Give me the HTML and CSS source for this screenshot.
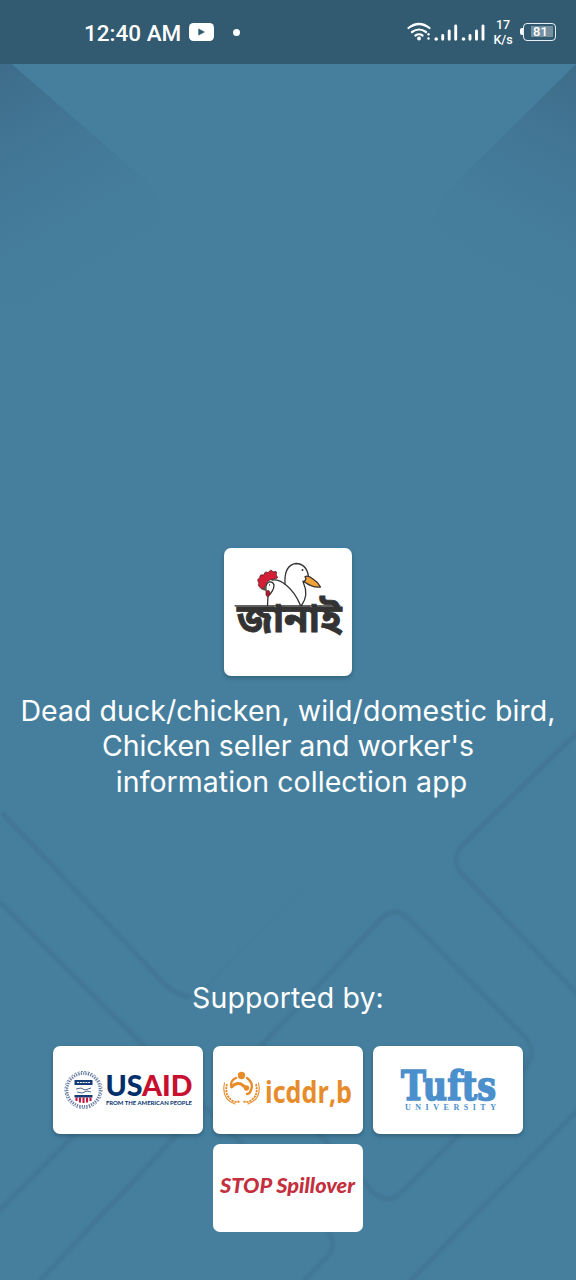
FILE: index.html
```html
<!DOCTYPE html>
<html lang="en">
<head>
<meta charset="utf-8">
<title>Janai</title>
<link rel="stylesheet" href="styles.css">
</head>
<body>
<div class="screen">
  <svg class="backdrop" viewBox="0 0 576 1280" aria-hidden="true">
    <defs>
      <linearGradient id="shade-left" gradientUnits="userSpaceOnUse" x1="0" y1="60" x2="140" y2="300">
        <stop offset="0" stop-color="#3d6c89"/><stop offset="1" stop-color="#467f9e" stop-opacity="0"/>
      </linearGradient>
      <linearGradient id="shade-right" gradientUnits="userSpaceOnUse" x1="576" y1="60" x2="450" y2="300">
        <stop offset="0" stop-color="#3d6c89"/><stop offset="1" stop-color="#467f9e" stop-opacity="0"/>
      </linearGradient>
      <linearGradient id="fade" gradientUnits="userSpaceOnUse" x1="195" y1="990" x2="310" y2="880">
        <stop offset="0" stop-color="#427897" stop-opacity=".5"/><stop offset="1" stop-color="#427897" stop-opacity=".1"/>
      </linearGradient>
    </defs>
    <path d="M0 60H7L150 184Q185 230 140 290Q80 350 0 300Z" fill="url(#shade-left)"/>
    <path d="M576 64V310Q510 350 450 285Q415 230 450 188Z" fill="url(#shade-right)"/>
    <g class="lines">
      <path d="M2 813L160 979Q174 995 190 997"/>
      <path d="M0 902L235 1137Q315 1215 328 1232Q338 1246 326 1258L303 1282"/>
      <path d="M580 730L462 846Q450 860 462 874L580 997"/>
      <path d="M240 1068L382 918Q395 906 408 918L525 1037Q538 1053 525 1068L402 1192Q388 1206 373 1192L240 1048"/>
      <path d="M-4 1214L90 1119"/>
      <path d="M37 1284L200 1110"/>
      <path d="M580 1108L407 1284"/>
    </g>
    <path d="M190 997Q204 992 220 972L310 880" fill="none" stroke="url(#fade)" stroke-width="5"/>
  </svg>

  <header class="status">
    <span class="time">12:40 AM</span>
    <svg class="youtube" viewBox="0 0 25 18"><rect width="25" height="18" rx="4.500" fill="#fff"/><path d="M9.300 5.400L16 9L9.300 12.600Z" fill="#325a70"/></svg>
    <span class="dot"></span>
    <svg class="signals" viewBox="0 0 82 24">
      <g fill="none" stroke="#fff" stroke-width="2.200" stroke-linecap="round">
        <path d="M3.500 8Q14 0 24.500 8M7 12Q14 7 21 12M10.500 15.500Q14 13 17.500 15.500"/>
      </g>
      <circle cx="14" cy="18.500" r="1.900" fill="#fff"/>
      <g fill="#fff"><circle cx="23.500" cy="14.200" r="1.200"/><circle cx="23.500" cy="18.500" r="1.200"/><circle cx="31.200" cy="19" r="1.800"/><circle cx="58.500" cy="19" r="1.800"/></g>
      <g stroke="#fff" stroke-width="2.900" stroke-linecap="round"><path d="M37.700 15.500V19.200M44.200 11V19.200M50.700 6V19.200M65 15.500V19.200M71.500 11V19.200M78 6V19.200"/></g>
    </svg>
    <span class="speed"><span>17</span><span>K/s</span></span>
    <span class="battery"><span class="level">81</span></span>
  </header>

  <main class="content">
    <div class="app-logo">
      <svg viewBox="0 0 128 128" role="img" aria-label="জানাই">
        <text class="bangla" x="13" y="84" textLength="105" lengthAdjust="spacingAndGlyphs">জানাই</text>
        <g fill="none" stroke="#333" stroke-width="1.300" stroke-linecap="round" stroke-linejoin="round">
          <path d="M11 57.800H116"/>
          <path d="M43.500 57.500L44 48Q50 43 50 37Q49 33 45 34Q41 36 42 42" fill="#fff"/>
          <path d="M48 32Q55 31 62 37Q71 44 76.500 57.500"/>
          <path d="M61 36Q60 17 72 15.500Q83 16 84.500 29M80.500 34Q78 32 79.500 35Q85 47 77.500 57.500"/>
          <path d="M81 28.700Q84 27 89 31Q94 34 96.500 39Q88 40 80 33.500Q83 31 81 28.700Z" fill="#f2a33a"/>
        </g>
        <path d="M38 41Q33 38 35 35Q32 31 36 30Q35 26 40 27Q41 22 44 25Q47 20 49 24Q54 22 52 27Q56 31 49 31Q42 32 41 39Z" fill="#d51d35" stroke="#542028" stroke-width=".8"/>
        <path d="M42 43Q46 41 46 46Q44 51 42 47Z" fill="#b21b2c" stroke="#542028" stroke-width=".7"/>
        <path d="M37 41L41 39L42 43L39 42Z" fill="#5b4a36"/>
        <circle cx="78.500" cy="22" r="1" fill="#333"/><circle cx="45.500" cy="37" r=".7" fill="#333"/>
      </svg>
    </div>
    <h1 class="description">Dead duck/chicken, wild/domestic bird,<br><span class="line-two">Chicken seller and worker's</span><br><span class="line-three">information collection app</span></h1>
    <h2 class="supported">Supported by:</h2>
    <section class="partners">
      <div class="card">
        <svg viewBox="0 0 150 88" role="img" aria-label="USAID">
          <g fill="none" stroke="#234276">
            <circle cx="30.500" cy="44" r="18.500" stroke-width=".7" stroke-dasharray="2 1.500"/>
            <circle cx="30.500" cy="44" r="16.500" stroke-width="2.600" stroke-dasharray="1.300 1.100" opacity=".7"/>
          </g>
          <path d="M21.500 34H39.500V39H21.500Z" fill="#143d78"/>
          <path d="M24 36.500H37" stroke="#fff" stroke-width="1.100" stroke-dasharray="2 .8"/>
          <path d="M23 43L28 42L32 44L38 42M24 46L29 47L34 45L38 46" fill="none" stroke="#50698c" stroke-width="1"/>
          <path d="M21.500 49H39.500V51.500H21.500Z" fill="#143d78"/>
          <path d="M23.500 51.500V55M27 51.500V56.500M30.500 51.500V57M34 51.500V56.500M37.500 51.500V55" stroke="#c21640" stroke-width="2.100"/>
          <text class="usaid" x="52.500" y="50" textLength="87" lengthAdjust="spacingAndGlyphs">US<tspan fill="#c8102e">AID</tspan></text>
          <text class="people" x="53" y="58.700" textLength="86" lengthAdjust="spacingAndGlyphs">FROM THE AMERICAN PEOPLE</text>
        </svg>
      </div>
      <div class="card">
        <svg viewBox="0 0 150 88" role="img" aria-label="icddr,b">
          <g fill="none" stroke="#e78c2b" stroke-linecap="round">
            <circle cx="28.500" cy="29.500" r="3.700" fill="#e78c2b" stroke="none"/>
            <path d="M18 39Q18 34 23 32M34 32Q41 37 38 44Q37 48 34 48" stroke-width="2.400"/>
            <path d="M18.500 41Q23 36 28 38L32 41" stroke-width="3"/>
            <circle cx="33.500" cy="42" r="2.700" fill="#e78c2b" stroke="none"/>
            <path d="M14 38Q11 50 20 55Q24 57 27 55M43 38Q46 50 37 55Q33 57 30 55" stroke-width="1.800" stroke-dasharray="2.200 .8" stroke-linecap="butt"/>
            <path d="M11.500 37Q8 53 22 58M45.500 37Q49 53 35 58" stroke-width="1.100"/>
          </g>
          <text class="icddr" x="52" y="57" textLength="87" lengthAdjust="spacingAndGlyphs">icddr,b</text>
        </svg>
      </div>
      <div class="card">
        <svg viewBox="0 0 150 88" role="img" aria-label="Tufts University">
          <text class="tufts" x="28" y="54" textLength="95" lengthAdjust="spacingAndGlyphs">Tufts</text>
          <text class="university" x="32" y="64.300" textLength="91">UNIVERSITY</text>
        </svg>
      </div>
      <div class="card">
        <svg viewBox="0 0 150 88" role="img" aria-label="STOP Spillover">
          <text class="stop" x="7" y="49" textLength="135" lengthAdjust="spacingAndGlyphs">STOP Spillover</text>
        </svg>
      </div>
    </section>
  </main>
</div>
</body>
</html>
```
FILE: styles.css
```css
* { box-sizing: border-box; }
body { margin: 0; }
.screen {
  position: relative;
  display: flex;
  flex-direction: column;
  width: 576px;
  height: 1280px;
  overflow: hidden;
  background: #467f9e;
  color: #fff;
  font-family: Inter, sans-serif;
}
.backdrop { position: absolute; inset: 0; width: 576px; height: 1280px; }
.lines { fill: none; stroke: #40738f; stroke-width: 5.5; opacity: .58; filter: blur(.8px); }
.status {
  position: relative;
  display: flex;
  align-items: center;
  flex: none;
  height: 64px;
  padding: 0 20px 0 84px;
  background: #325a70;
  font-family: Roboto, sans-serif;
}
.time { width: 98px; margin-top: 1px; font-size: 22.5px; font-weight: 500; white-space: nowrap; }
.youtube { width: 25px; height: 18px; margin-left: 7px; }
.dot { width: 7px; height: 7px; margin-left: 19px; border-radius: 50%; background: #fff; }
.signals { width: 82px; height: 24px; margin-left: auto; }
.speed {
  display: flex;
  flex-direction: column;
  align-items: center;
  width: 24px;
  margin-left: 4px;
  font-size: 12.5px;
  font-weight: 500;
  line-height: 15px;
}
.battery {
  position: relative;
  width: 33px;
  height: 18px;
  margin-left: 8px;
  padding: 2px;
  border: 1.5px solid #e7eff4;
  border-radius: 4px;
}
.battery::before {
  content: "";
  position: absolute;
  left: -4px;
  top: 4px;
  width: 2.5px;
  height: 7px;
  border-radius: 2px 0 0 2px;
  background: #fff;
}
.level {
  display: block;
  height: 11px;
  margin-left: 5px;
  padding-right: 3px;
  background: #7590a0;
  font-size: 13px;
  font-weight: 500;
  line-height: 12px;
  text-align: center;
}
.content { position: relative; display: flex; flex-direction: column; align-items: center; padding-top: 484px; }
.app-logo, .card { background: #fff; border-radius: 7px; box-shadow: 0 2px 4px rgba(20, 50, 70, .4); }
.app-logo { width: 128px; height: 128px; }
.app-logo svg, .card svg { display: block; width: 100%; height: 100%; }
.description, .supported { margin: 0; font-size: 28.5px; font-weight: 400; text-align: center; white-space: nowrap; }
.description { margin-top: 17px; line-height: 35.3px; letter-spacing: .05px; }
.line-two { letter-spacing: -.05px; }
.line-three { padding-left: 7px; }
.supported { margin-top: 181px; line-height: 35px; letter-spacing: .1px; }
.partners { display: flex; flex-wrap: wrap; justify-content: center; gap: 10px; width: 480px; margin-top: 31px; }
.card { width: 150px; height: 88px; }
.card:last-child { box-shadow: none; }
.bangla { font: 700 39px "Noto Sans Bengali", "Noto Sans", sans-serif; fill: #333; stroke: #333; stroke-width: .8px; }
.usaid { font: 900 28px Lato, sans-serif; fill: #002f6c; }
.people { font: 700 6.2px Lato, sans-serif; fill: #002f6c; }
.icddr { font: 700 31px "Open Sans", sans-serif; fill: #e78c2b; }
.tufts { font: 700 41px "DejaVu Serif", serif; fill: #4b8fcc; stroke: #4b8fcc; stroke-width: 1.6px; }
.university { font: 700 8px "Liberation Serif", serif; fill: #4b8fcc; }
.stop { font: italic 900 21px Lato, sans-serif; fill: #c42f3d; }
```
